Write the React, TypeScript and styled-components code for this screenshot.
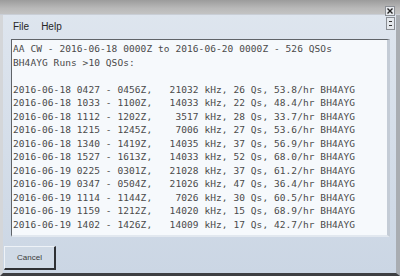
import React from "react";
import styled, { createGlobalStyle } from "styled-components";

const Global = createGlobalStyle`
  html, body { margin: 0; padding: 0; background: #cdd8e5; }
  #root { width: 400px; height: 276px; }
`;

const Window = styled.div`
  position: relative;
  width: 400px;
  height: 276px;
  box-sizing: border-box;
  display: flex;
  flex-direction: column;
  border-left: 3px solid #d4d6d9;
  border-right: 4px solid #a9adb2;
  border-bottom: 3px solid #3e3f42;
  background: linear-gradient(#dfe6ef, #cbd6e4);
  font-family: "Liberation Sans", Arial, sans-serif;
`;

const TitleBar = styled.div`
  height: 14px;
  margin-left: -3px;
  margin-right: -4px;
  background: linear-gradient(#9c9c9c, #b9b9b9 60%, #c3c3c3);
  border-bottom: 1px solid #c9ced6;
`;

const MenuBar = styled.div`
  height: 24px;
  display: flex;
  align-items: center;
  gap: 12px;
  padding-left: 10px;
  font-size: 10px;
  color: #262626;
`;

const MenuItem = styled.span`
  line-height: 12px;
`;

const Content = styled.div`
  padding: 0 6px 0 8px;
`;

const TextBox = styled.pre`
  margin: 0;
  height: 198px;
  box-sizing: border-box;
  border-top: 1px solid #5f6368;
  border-left: 1px solid #5f6368;
  border-right: 3px solid #c4ccd6;
  border-bottom: 2px solid #e2e8ef;
  background: #f6f9fc;
  padding: 2px 0 0 1px;
  font-family: "DejaVu Sans Mono", "Liberation Mono", monospace;
  font-size: 9.5px;
  letter-spacing: 0.08px;
  line-height: 13.5px;
  color: #4a4a4a;
  white-space: pre;
  overflow: hidden;
`;

const Footer = styled.div`
  flex: 1;
  display: flex;
  align-items: flex-start;
  padding: 9px 0 0 1px;
`;

const Button = styled.button`
  width: 52px;
  height: 24px;
  box-sizing: border-box;
  padding: 0;
  background: #d0dae6;
  border-top: 1px solid #eef2f7;
  border-left: 1px solid #eef2f7;
  border-right: 2px solid #2e3034;
  border-bottom: 2px solid #2e3034;
  font-family: "Liberation Sans", Arial, sans-serif;
  font-size: 8px;
  color: #3a3a3a;
`;

const Controls = styled.div`
  position: absolute;
  top: 6px;
  right: 1px;
  display: flex;
  flex-direction: column;
  align-items: flex-end;
  gap: 1px;
`;

const CloseBox = styled.div`
  width: 10px;
  height: 10px;
  box-sizing: border-box;
  border: 1px solid #8a8e94;
  background: #e8ebef;
  display: flex;
  align-items: center;
  justify-content: center;
`;

const SmallBox = styled.div`
  width: 9px;
  height: 13px;
  box-sizing: border-box;
  border: 1px solid #8a8e94;
  background: #e3e7ec;
  display: flex;
  flex-direction: column;
  align-items: center;
  justify-content: space-evenly;
`;

const Tick = styled.div`
  width: 3px;
  height: 1px;
  background: #333;
`;

const text = `AA CW - 2016-06-18 0000Z to 2016-06-20 0000Z - 526 QSOs
BH4AYG Runs >10 QSOs:

2016-06-18 0427 - 0456Z,   21032 kHz, 26 Qs, 53.8/hr BH4AYG
2016-06-18 1033 - 1100Z,   14033 kHz, 22 Qs, 48.4/hr BH4AYG
2016-06-18 1112 - 1202Z,    3517 kHz, 28 Qs, 33.7/hr BH4AYG
2016-06-18 1215 - 1245Z,    7006 kHz, 27 Qs, 53.6/hr BH4AYG
2016-06-18 1340 - 1419Z,   14035 kHz, 37 Qs, 56.9/hr BH4AYG
2016-06-18 1527 - 1613Z,   14033 kHz, 52 Qs, 68.0/hr BH4AYG
2016-06-19 0225 - 0301Z,   21028 kHz, 37 Qs, 61.2/hr BH4AYG
2016-06-19 0347 - 0504Z,   21026 kHz, 47 Qs, 36.4/hr BH4AYG
2016-06-19 1114 - 1144Z,    7026 kHz, 30 Qs, 60.5/hr BH4AYG
2016-06-19 1159 - 1212Z,   14020 kHz, 15 Qs, 68.9/hr BH4AYG
2016-06-19 1402 - 1426Z,   14009 kHz, 17 Qs, 42.7/hr BH4AYG`;

export default function App() {
  return (
    <>
      <Global />
      <Window>
        <TitleBar />
        <MenuBar>
          <MenuItem>File</MenuItem>
          <MenuItem>Help</MenuItem>
        </MenuBar>
        <Content>
          <TextBox>{text}</TextBox>
        </Content>
        <Footer>
          <Button>Cancel</Button>
        </Footer>
        <Controls>
          <CloseBox>
            <svg width="6" height="6" viewBox="0 0 6 6">
              <path d="M0.5 0.5 L5.5 5.5 M5.5 0.5 L0.5 5.5" stroke="#222" strokeWidth="1.4" />
            </svg>
          </CloseBox>
          <SmallBox>
            <Tick />
            <Tick />
          </SmallBox>
        </Controls>
      </Window>
    </>
  );
}
